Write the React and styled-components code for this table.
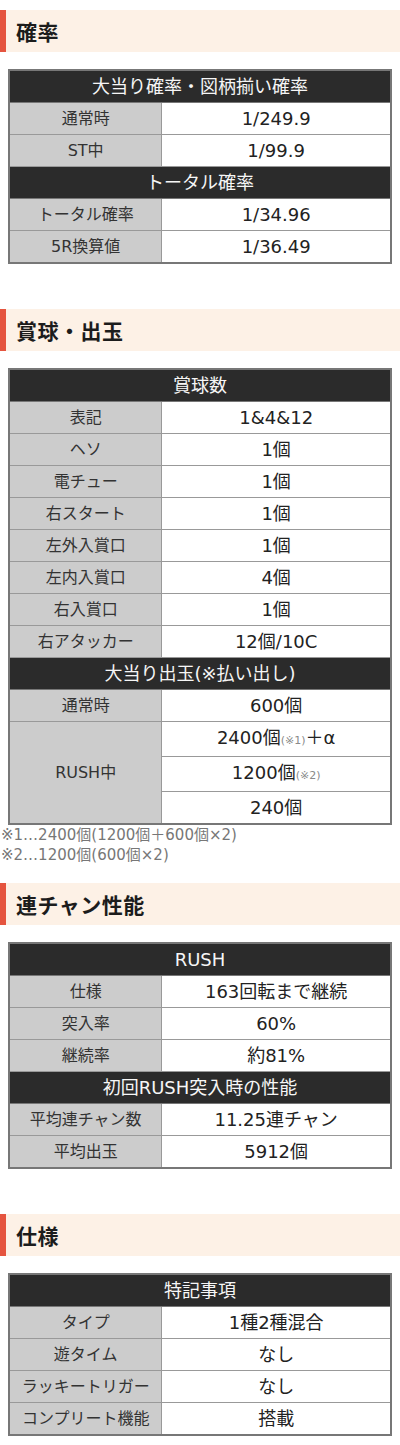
import React from "react";
import styled, { createGlobalStyle } from "styled-components";

const Global = createGlobalStyle`
  html, body { margin: 0; padding: 0; background: #fff; }
  body {
    font-family: "DejaVu Sans", "Noto Sans CJK JP", sans-serif;
    color: #222;
    width: 400px;
  }
`;

const Page = styled.div`
  display: flex;
  flex-direction: column;
  padding-top: 10px;
  padding-bottom: 10px;
`;

const Heading = styled.h2`
  margin: ${(p) => (p.$first ? "0" : "18px")} 0 0;
  height: 42px;
  display: flex;
  align-items: center;
  background: #fdf1e6;
  border-left: 6px solid #e5543f;
  padding-left: 10px;
  font-family: "Noto Sans CJK JP", sans-serif;
  font-size: 21px;
  font-weight: 700;
  color: #1c1c1c;
  letter-spacing: 0.5px;
`;

const Table = styled.table`
  align-self: center;
  width: 96%;
  margin: 17px 0 ${(p) => (p.$flush ? "0" : "27px")};
  border-collapse: collapse;
  border: 2px solid #777;
  table-layout: fixed;
`;

const LabelCol = styled.col`
  width: 40%;
`;

const HeadCell = styled.th`
  background: #2b2b2b;
  color: #f6f6f6;
  font-weight: 400;
  font-size: 18px;
  line-height: 23px;
  padding: 4px 0;
  text-align: center;
  border: 1px solid #777;
`;

const Label = styled.td`
  background: #cccccc;
  color: #333;
  font-size: 16px;
  line-height: 23px;
  padding: 4px 0;
  text-align: center;
  border: 1px solid #999;
  white-space: nowrap;
`;

const Value = styled.td`
  background: #fff;
  color: #222;
  font-size: 18px;
  line-height: 23px;
  padding: 4px 0;
  text-align: center;
  border: 1px solid #999;
  white-space: nowrap;
`;

const Ref = styled.span`
  font-size: 11px;
  color: #8a8a8a;
`;

const Notes = styled.div`
  font-size: 15px;
  line-height: 20px;
  color: #777;
  padding-left: 1px;
`;

const Head = ({ children }) => (
  <tr>
    <HeadCell colSpan={2}>{children}</HeadCell>
  </tr>
);

const Row = ({ label, value }) => (
  <tr>
    <Label>{label}</Label>
    <Value>{value}</Value>
  </tr>
);

const SpecTable = ({ flush, children }) => (
  <Table $flush={flush}>
    <colgroup>
      <LabelCol />
      <col />
    </colgroup>
    <tbody>{children}</tbody>
  </Table>
);

export default function App() {
  return (
    <>
      <Global />
      <Page>
        <Heading $first>確率</Heading>
        <SpecTable>
          <Head>大当り確率・図柄揃い確率</Head>
          <Row label="通常時" value="1/249.9" />
          <Row label="ST中" value="1/99.9" />
          <Head>トータル確率</Head>
          <Row label="トータル確率" value="1/34.96" />
          <Row label="5R換算値" value="1/36.49" />
        </SpecTable>

        <Heading>賞球・出玉</Heading>
        <SpecTable flush>
          <Head>賞球数</Head>
          <Row label="表記" value="1&4&12" />
          <Row label="ヘソ" value="1個" />
          <Row label="電チュー" value="1個" />
          <Row label="右スタート" value="1個" />
          <Row label="左外入賞口" value="1個" />
          <Row label="左内入賞口" value="4個" />
          <Row label="右入賞口" value="1個" />
          <Row label="右アタッカー" value="12個/10C" />
          <Head>大当り出玉(※払い出し)</Head>
          <Row label="通常時" value="600個" />
          <tr>
            <Label rowSpan={3}>RUSH中</Label>
            <Value>
              2400個<Ref>(※1)</Ref>＋α
            </Value>
          </tr>
          <tr>
            <Value>
              1200個<Ref>(※2)</Ref>
            </Value>
          </tr>
          <tr>
            <Value>240個</Value>
          </tr>
        </SpecTable>
        <Notes>
          <div>※1…2400個(1200個＋600個×2)</div>
          <div>※2…1200個(600個×2)</div>
        </Notes>

        <Heading>連チャン性能</Heading>
        <SpecTable>
          <Head>RUSH</Head>
          <Row label="仕様" value="163回転まで継続" />
          <Row label="突入率" value="60%" />
          <Row label="継続率" value="約81%" />
          <Head>初回RUSH突入時の性能</Head>
          <Row label="平均連チャン数" value="11.25連チャン" />
          <Row label="平均出玉" value="5912個" />
        </SpecTable>

        <Heading>仕様</Heading>
        <SpecTable>
          <Head>特記事項</Head>
          <Row label="タイプ" value="1種2種混合" />
          <Row label="遊タイム" value="なし" />
          <Row label="ラッキートリガー" value="なし" />
          <Row label="コンプリート機能" value="搭載" />
        </SpecTable>
      </Page>
    </>
  );
}
